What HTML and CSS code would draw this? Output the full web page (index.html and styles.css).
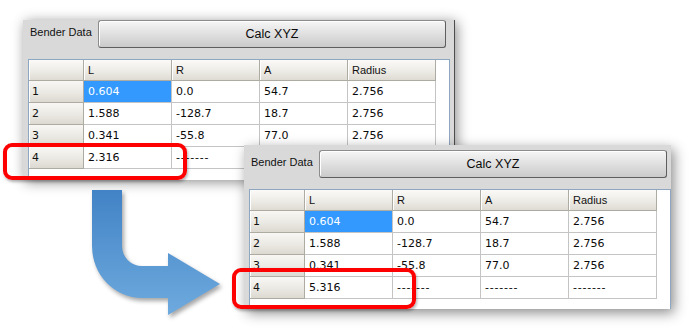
FILE: index.html
```html
<!DOCTYPE html>
<html>
<head>
<meta charset="utf-8">
<link rel="stylesheet" href="styles.css">
</head>
<body>
<div class="canvas">
  <div class="win win1">
    <div class="bar">
      <div class="tab">Bender Data</div>
      <div class="btn">Calc XYZ</div>
    </div>
    <div class="table">
      <div class="grid">
        <div class="hc"></div><div class="hc">L</div><div class="hc">R</div><div class="hc">A</div><div class="hc">Radius</div>
        <div class="rh">1</div><div class="c sel">0.604</div><div class="c">0.0</div><div class="c">54.7</div><div class="c">2.756</div>
        <div class="rh">2</div><div class="c">1.588</div><div class="c">-128.7</div><div class="c">18.7</div><div class="c">2.756</div>
        <div class="rh">3</div><div class="c">0.341</div><div class="c">-55.8</div><div class="c">77.0</div><div class="c">2.756</div>
        <div class="rh">4</div><div class="c">2.316</div><div class="c dash">-------</div><div class="c"></div><div class="c"></div>
      </div>
    </div>
  </div>

  <svg class="arrow" width="140" height="140" viewBox="80 185 140 140">
    <defs>
      <linearGradient id="ag" x1="0" y1="190" x2="0" y2="315" gradientUnits="userSpaceOnUse">
        <stop offset="0" stop-color="#4283c6"/>
        <stop offset="1" stop-color="#6eaade"/>
      </linearGradient>
    </defs>
    <path d="M92,190 H122 V246 A20,20 0 0 0 142,266 H168 V253 L220,284 L168,315 V298 H142 A50,52 0 0 1 92,246 Z" fill="url(#ag)"/>
  </svg>

  <div class="win win2">
    <div class="bar">
      <div class="tab">Bender Data</div>
      <div class="btn">Calc XYZ</div>
    </div>
    <div class="table">
      <div class="grid">
        <div class="hc"></div><div class="hc">L</div><div class="hc">R</div><div class="hc">A</div><div class="hc">Radius</div>
        <div class="rh">1</div><div class="c sel">0.604</div><div class="c">0.0</div><div class="c">54.7</div><div class="c">2.756</div>
        <div class="rh">2</div><div class="c">1.588</div><div class="c">-128.7</div><div class="c">18.7</div><div class="c">2.756</div>
        <div class="rh">3</div><div class="c">0.341</div><div class="c">-55.8</div><div class="c">77.0</div><div class="c">2.756</div>
        <div class="rh">4</div><div class="c">5.316</div><div class="c dash">-------</div><div class="c dash">-------</div><div class="c dash">-------</div>
      </div>
    </div>
  </div>

  <div class="mark mark1"></div>
  <div class="mark mark2"></div>
</div>
</body>
</html>
```

FILE: styles.css
```css
* { box-sizing: border-box; }
html, body { margin: 0; padding: 0; background: #ffffff; }
body { width: 690px; height: 329px; overflow: hidden; font-family: "Liberation Sans", Arial, sans-serif; }
.canvas { position: relative; width: 690px; height: 329px; }

.win {
  position: absolute;
  background: #d9d9d9;
  overflow: hidden;
  display: flex;
  flex-direction: column;
}
.win1 {
  left: 23px; top: 20px; width: 432px; height: 160px;
  border-right: 1px solid #4d4d4d;
  box-shadow: 2px 2px 12px rgba(0,0,0,0.45);
}
.win2 {
  left: 244px; top: 145px; width: 427px; height: 164px;
  padding-top: 5px;
  box-shadow: 3px 4px 12px rgba(0,0,0,0.45);
}

.bar { display: flex; width: 423px; height: 28px; flex: none; }
.tab {
  width: 75px;
  padding: 6px 0 0 7px;
  font-size: 11px;
  color: #111;
  white-space: nowrap;
}
.btn {
  flex: 1;
  display: flex; align-items: center; justify-content: center;
  font-size: 12.5px;
  color: #0a0a0a;
  border: 1px solid #8c8c8c;
  border-right-color: #5e5e5e;
  border-bottom-color: #5e5e5e;
  border-radius: 3px;
  background: linear-gradient(#f6f6f6, #e2e2e2 45%, #cacaca);
  box-shadow: inset 1px 1px 0 #ffffff;
}

.table {
  margin: 11px 0 0 5px;
  width: 422px;
  flex: 1;
  background: #ffffff;
  border: 1px solid #8ea7c0;
  border-bottom: 0;
}
.grid {
  display: grid;
  grid-template-columns: 55px 88px 88px 88px 88px;
  grid-template-rows: 21px 22px 22px 22px 22px;
}
.hc, .rh, .c {
  display: flex; align-items: center;
  white-space: nowrap; overflow: hidden;
}
.hc {
  padding-left: 4px;
  font-size: 11px;
  color: #111;
  background: linear-gradient(#fbfaf8, #eceae4 60%, #dedbd3);
  border-right: 1px solid #aeaba3;
  border-bottom: 1px solid #aeaba3;
  box-shadow: inset 1px 0 0 #ffffff;
}
.rh {
  padding-left: 3px;
  font-family: "DejaVu Sans", Verdana, sans-serif;
  font-size: 11px;
  color: #111;
  background: linear-gradient(#f8f7f4, #ebe9e3 55%, #dcd9d1);
  border-right: 1px solid #aeaba3;
  border-bottom: 1px solid #aeaba3;
  box-shadow: inset 1px 0 0 #ffffff;
}
.c {
  padding-left: 4px;
  font-family: "DejaVu Sans", Verdana, sans-serif;
  font-size: 11px;
  color: #0a0a0a;
  border-right: 1px solid #c4c4c4;
  border-bottom: 1px solid #c4c4c4;
}
.c.sel { background: #3399ff; color: #ffffff; }
.c.dash { letter-spacing: 0.8px; }

.arrow {
  position: absolute;
  left: 80px; top: 185px;
  filter: drop-shadow(2px 3px 2px rgba(0,0,0,0.35));
}

.mark {
  position: absolute;
  border: 4px solid #ff0000;
  border-radius: 9px;
  box-shadow: 1px 2px 3px rgba(0,0,0,0.3);
}
.mark1 { left: 3px; top: 143px; width: 184px; height: 37px; }
.mark2 { left: 232px; top: 268px; width: 184px; height: 41px; }
```
